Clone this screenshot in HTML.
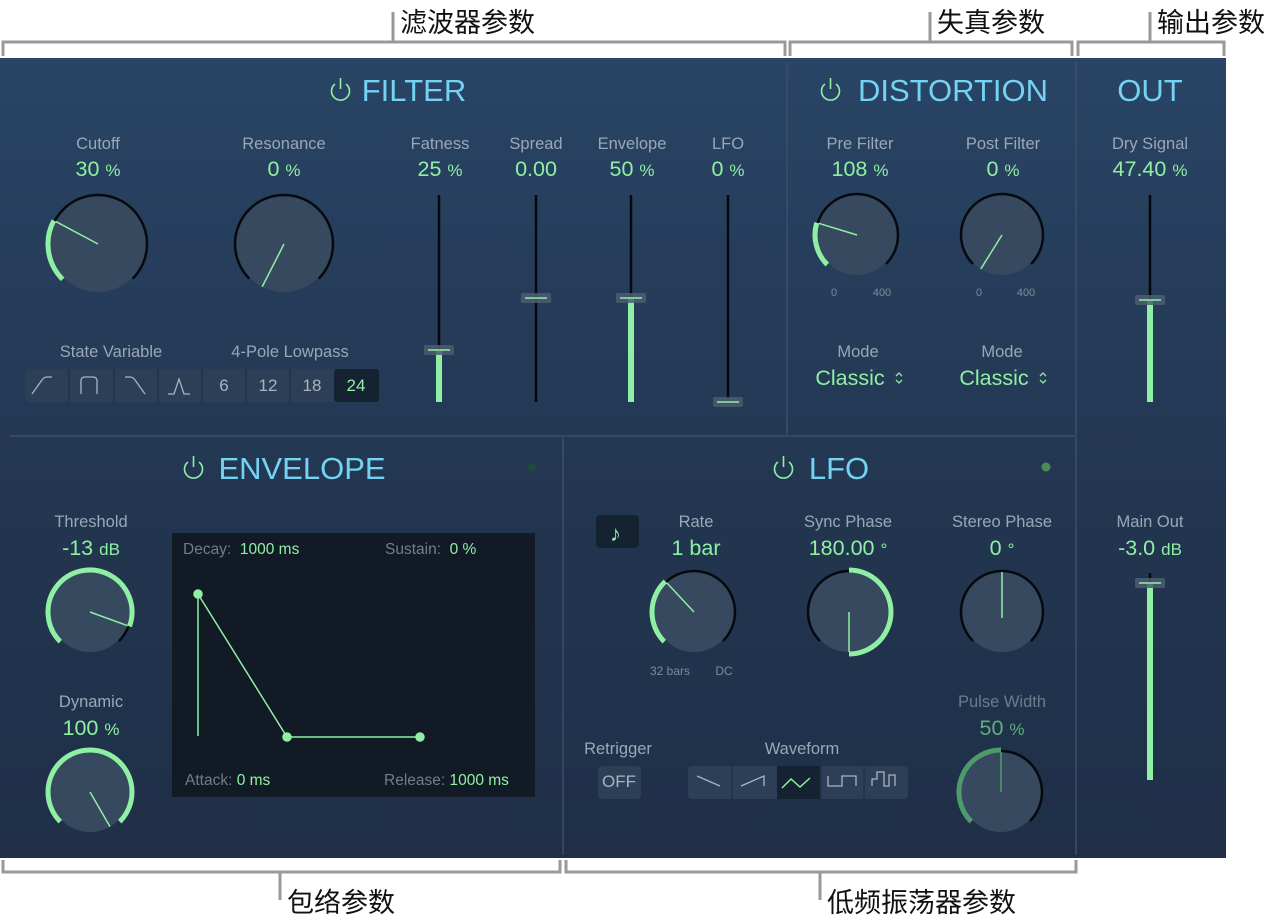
<!DOCTYPE html>
<html><head><meta charset="utf-8">
<style>
body{margin:0;width:1282px;height:923px;background:#fff;position:relative;overflow:hidden;font-family:"Liberation Sans","Noto Sans CJK SC",sans-serif}
#panel{position:absolute;left:0;top:58px;width:1226px;height:800px;background:linear-gradient(#294465,#22354f 60%,#1f2f48)}
.t{position:absolute;transform:translateX(-50%);white-space:nowrap}
.l{color:#9aa7b6;font-size:16.5px}
.v{color:#8ff0a4;font-size:21.5px}
.v small{font-size:17px}
.h{color:#74d3f2;font-size:31px}
.cn{position:absolute;font-size:27px;color:#111;font-family:"Noto Sans CJK SC",sans-serif;line-height:1}
.s{color:#7d8a99;font-size:11px}
svg{position:absolute;left:0;top:0}
.ud{display:inline-block;vertical-align:middle}
</style></head><body>
<div id="panel"></div>
<svg id="g" width="1282" height="923">
<g stroke="#999" stroke-width="3" fill="none">
<path d="M3 56V42H785V56M393 42V12"/>
<path d="M790 56V42H1072V56M930 42V12"/>
<path d="M1078 56V42H1224V56M1150 42V12"/>
<path d="M3 860V872H560V860M280 872V900"/>
<path d="M566 860V872H1076V860M820 872V900"/>
</g>
<g stroke="#3a4f68" stroke-width="1.5">
<line x1="787" y1="62" x2="787" y2="435"/><line x1="10" y1="436" x2="1075" y2="436"/>
<line x1="563" y1="437" x2="563" y2="855"/><line x1="1076" y1="62" x2="1076" y2="855"/>
</g>
<rect x="172" y="533" width="363" height="264" fill="#111a25"/>
<g stroke="#8ff0a4" stroke-width="1.5" fill="#8ff0a4">
<line x1="198" y1="594" x2="198" y2="736"/><polyline points="198,594 287,737 420,737" fill="none"/>
<circle cx="198" cy="594" r="4"/><circle cx="287" cy="737" r="4"/><circle cx="420" cy="737" r="4"/>
</g>
<circle cx="532" cy="467" r="4.5" fill="#1f4a3a"/><circle cx="1046" cy="467" r="4.5" fill="#4c8a5a"/>
<g>
<rect x="25" y="369" width="354" height="33" rx="4" fill="#2c3f56"/>
<rect x="334" y="369" width="45" height="33" rx="3" fill="#152231"/>
<g stroke="#203148" stroke-width="1.5"><line x1="69" y1="369" x2="69" y2="402"/><line x1="114" y1="369" x2="114" y2="402"/><line x1="158" y1="369" x2="158" y2="402"/><line x1="202" y1="369" x2="202" y2="402"/><line x1="246" y1="369" x2="246" y2="402"/><line x1="290" y1="369" x2="290" y2="402"/></g>
<g stroke="#a9b4c0" stroke-width="1.3" fill="none">
<path d="M32 394L42 380Q44 377 47 377H52"/><path d="M81 394V381Q81 377 85 377H93Q97 377 97 381V394"/>
<path d="M125 377H130Q133 377 135 380L145 394"/><path d="M168 394H174L179 379L184 394H190"/>
</g>
</g>
<rect x="596" y="515" width="43" height="33" rx="4" fill="#152231"/>
<text x="610" y="541" fill="#8ff0a4" font-size="22">♪</text>
<rect x="598" y="766" width="43" height="33" rx="4" fill="#2c3f56"/>
<rect x="688" y="766" width="220" height="33" rx="4" fill="#2c3f56"/>
<rect x="777" y="766" width="43" height="33" fill="#152231"/>
<g stroke="#203148" stroke-width="1.5"><line x1="732" y1="766" x2="732" y2="799"/><line x1="821" y1="766" x2="821" y2="799"/><line x1="864" y1="766" x2="864" y2="799"/></g>
<g stroke="#a9b4c0" stroke-width="1.3" fill="none">
<path d="M697 776L720 786"/><path d="M741 786L764 776V786"/>
<path d="M828 776V786H842V776H856V786" /><path d="M872 786V779H877V772H884V786H889V775H895V786"/>
</g>
<path d="M782 788L791 779L800 787L810 778" stroke="#8ff0a4" stroke-width="1.5" fill="none"/>
<g stroke="#8ff0a4" stroke-width="1.6" fill="none">
<path d="M335 84A9 9 0 1 0 346 84M340.5 78V89"/>
<path d="M825 84A9 9 0 1 0 836 84M830.5 78V89"/>
<path d="M188 462A9 9 0 1 0 199 462M193.5 456V467"/>
<path d="M778 462A9 9 0 1 0 789 462M783.5 456V467"/>
</g>
<g stroke="#8ff0a4" stroke-width="1.3" fill="none">
<path d="M896 376L899 373L902 376M896 380L899 383L902 380"/>
<path d="M1040 376L1043 373L1046 376M1040 380L1043 383L1046 380"/>
</g>
<g id="dyn"></g>
</svg>
<div class="cn" style="left:400px;top:7px">滤波器参数</div>
<div class="cn" style="left:937px;top:7px">失真参数</div>
<div class="cn" style="left:1157px;top:7px">输出参数</div>
<div class="cn" style="left:287px;top:887px">包络参数</div>
<div class="cn" style="left:827px;top:887px">低频振荡器参数</div>

<div class="t h" style="left:414px;top:73px">FILTER</div>
<div class="t h" style="left:953px;top:73px">DISTORTION</div>
<div class="t h" style="left:1150px;top:73px">OUT</div>
<div class="t h" style="left:302px;top:451px">ENVELOPE</div>
<div class="t h" style="left:839px;top:451px">LFO</div>

<div class="t l" style="left:98px;top:135px">Cutoff</div><div class="t v" style="left:98px;top:157px">30 <small>%</small></div>
<div class="t l" style="left:284px;top:135px">Resonance</div><div class="t v" style="left:284px;top:157px">0 <small>%</small></div>
<div class="t l" style="left:440px;top:135px">Fatness</div><div class="t v" style="left:440px;top:157px">25 <small>%</small></div>
<div class="t l" style="left:536px;top:135px">Spread</div><div class="t v" style="left:536px;top:157px">0.00</div>
<div class="t l" style="left:632px;top:135px">Envelope</div><div class="t v" style="left:632px;top:157px">50 <small>%</small></div>
<div class="t l" style="left:728px;top:135px">LFO</div><div class="t v" style="left:728px;top:157px">0 <small>%</small></div>
<div class="t l" style="left:860px;top:135px">Pre Filter</div><div class="t v" style="left:860px;top:157px">108 <small>%</small></div>
<div class="t l" style="left:1003px;top:135px">Post Filter</div><div class="t v" style="left:1003px;top:157px">0 <small>%</small></div>
<div class="t l" style="left:1150px;top:135px">Dry Signal</div><div class="t v" style="left:1150px;top:157px">47.40 <small>%</small></div>
<div class="t s" style="left:834px;top:287px">0</div><div class="t s" style="left:882px;top:287px">400</div>
<div class="t s" style="left:979px;top:287px">0</div><div class="t s" style="left:1026px;top:287px">400</div>
<div class="t l" style="left:111px;top:343px">State Variable</div>
<div class="t l" style="left:290px;top:343px">4-Pole Lowpass</div>
<div class="t" style="left:224px;top:376px;color:#a9b4c0;font-size:17px">6</div>
<div class="t" style="left:268px;top:376px;color:#a9b4c0;font-size:17px">12</div>
<div class="t" style="left:312px;top:376px;color:#a9b4c0;font-size:17px">18</div>
<div class="t" style="left:356px;top:376px;color:#8ff0a4;font-size:17px">24</div>
<div class="t l" style="left:858px;top:343px">Mode</div><div class="t v" style="left:850px;top:366px">Classic</div>
<div class="t l" style="left:1002px;top:343px">Mode</div><div class="t v" style="left:994px;top:366px">Classic</div>

<div class="t l" style="left:91px;top:513px">Threshold</div><div class="t v" style="left:91px;top:536px">-13 <small>dB</small></div>
<div class="t l" style="left:91px;top:693px">Dynamic</div><div class="t v" style="left:91px;top:716px">100 <small>%</small></div>
<div class="t l" style="left:696px;top:513px">Rate</div><div class="t v" style="left:696px;top:536px">1 bar</div>
<div class="t l" style="left:848px;top:513px">Sync Phase</div><div class="t v" style="left:848px;top:536px">180.00 <small>°</small></div>
<div class="t l" style="left:1002px;top:513px">Stereo Phase</div><div class="t v" style="left:1002px;top:536px">0 <small>°</small></div>
<div class="t s" style="left:670px;top:664px;font-size:12px">32 bars</div><div class="t s" style="left:724px;top:664px;font-size:12px">DC</div>
<div class="t l" style="left:1002px;top:693px;color:#6b7b8d">Pulse Width</div><div class="t v" style="left:1002px;top:716px;color:#5fae7c">50 <small>%</small></div>
<div class="t l" style="left:1150px;top:513px">Main Out</div><div class="t v" style="left:1150px;top:536px">-3.0 <small>dB</small></div>
<div class="t l" style="left:618px;top:740px">Retrigger</div>
<div class="t" style="left:619px;top:772px;color:#a9b4c0;font-size:17px">OFF</div>
<div class="t l" style="left:802px;top:740px">Waveform</div>

<div style="position:absolute;left:183px;top:541px;font-size:15.5px;color:#6f7e8e">Decay: <span style="color:#8ff0a4">&nbsp;1000 ms</span></div>
<div style="position:absolute;left:385px;top:541px;font-size:15.5px;color:#6f7e8e">Sustain: <span style="color:#8ff0a4">&nbsp;0 %</span></div>
<div style="position:absolute;left:185px;top:772px;font-size:15.5px;color:#6f7e8e">Attack: <span style="color:#8ff0a4">0 ms</span></div>
<div style="position:absolute;left:384px;top:772px;font-size:15.5px;color:#6f7e8e">Release: <span style="color:#8ff0a4">1000 ms</span></div>
<script>
var G=document.getElementById("dyn"),h="";
function pt(cx,cy,r,a){a=a*Math.PI/180;return [cx+r*Math.sin(a),cy-r*Math.cos(a)];}
function arc(cx,cy,r,a0,a1,col,w){var p=pt(cx,cy,r,a0),q=pt(cx,cy,r,a1),la=(a1-a0)>180?1:0;
return '<path d="M'+p[0]+' '+p[1]+'A'+r+' '+r+' 0 '+la+' 1 '+q[0]+' '+q[1]+'" stroke="'+col+'" stroke-width="'+w+'" fill="none"/>';}
function knob(cx,cy,r,g0,g1,pa,gc,pi){
h+='<circle cx="'+cx+'" cy="'+cy+'" r="'+(r-2)+'" fill="#36495f"/>';
h+=arc(cx,cy,r-1,225,495,"#06090d",2.5);
if(g1>g0)h+=arc(cx,cy,r,g0,g1,gc||"#8ff0a4",5);
var p=pt(cx,cy,r-2,pa),s=pt(cx,cy,pi||0,pa);
h+='<line x1="'+s[0]+'" y1="'+s[1]+'" x2="'+p[0]+'" y2="'+p[1]+'" stroke="'+(gc||"#8ff0a4")+'" stroke-width="1.5"/>';}
knob(98,244,50,225,298,298);
knob(284,244,50,0,0,207);
knob(857,235,42,225,287,287);
knob(1002,235,42,0,0,212);
knob(90,612,42,225,470,470,null,0);
knob(90,792,42,225,495,510,null,0);
knob(694,612,42,225,317,317);
knob(849,612,42,360,540,540,null,0);
knob(1002,612,42,0,0,0,null,-6);
knob(1001,792,42,225,360,360,"#4f9a6c");
function slider(x,y0,y1,hy,fill){h+='<line x1="'+x+'" y1="'+y0+'" x2="'+x+'" y2="'+y1+'" stroke="#05080c" stroke-width="2.5"/>';
if(fill)h+='<rect x="'+(x-3)+'" y="'+hy+'" width="6" height="'+(y1-hy)+'" fill="#8ff0a4"/>';
h+='<rect x="'+(x-15)+'" y="'+(hy-5)+'" width="30" height="10" rx="2" fill="#4c5d71" opacity=".85"/><line x1="'+(x-11)+'" y1="'+hy+'" x2="'+(x+11)+'" y2="'+hy+'" stroke="#8ff0a4" stroke-width="1.5"/>';}
slider(439,195,402,350,1);slider(536,195,402,298,0);slider(631,195,402,298,1);slider(728,195,402,402,0);
slider(1150,195,402,300,1);slider(1150,573,780,583,1);
G.innerHTML=h;
</script>
</body></html>
